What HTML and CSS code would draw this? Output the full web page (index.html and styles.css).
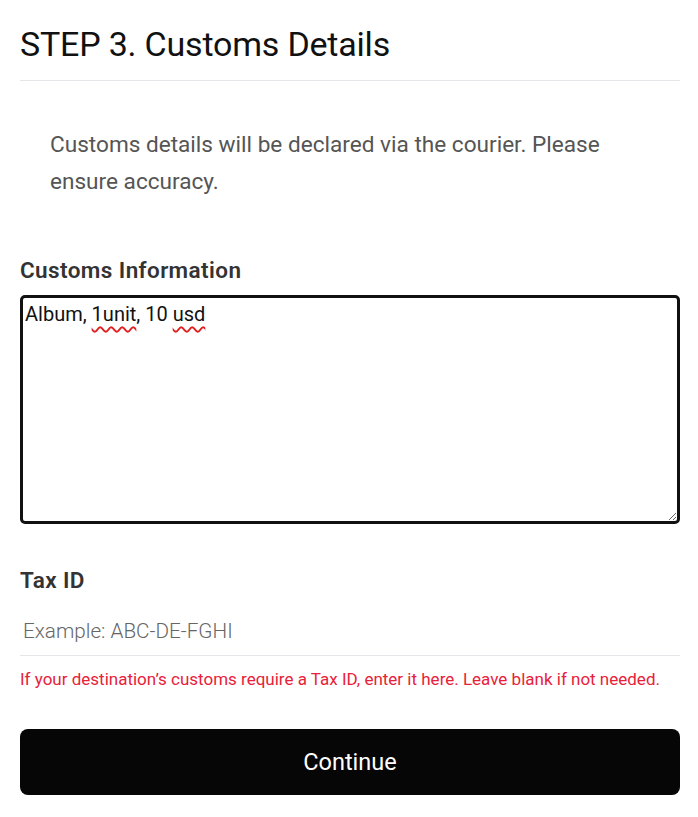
FILE: index.html
```html
<!DOCTYPE html>
<html lang="en">
<head>
    <meta charset="UTF-8">
    <meta name="viewport" content="width=device-width, initial-scale=1.0">
    <title>Customs Details</title>
    <link rel="stylesheet" href="styles.css">
</head>
<body>
    <div class="container">
        <header>
            <h1>STEP 3. Customs Details</h1>
        </header>

        <p class="notice">Customs details will be declared via the courier. Please ensure accuracy.</p>

        <form>
            <div class="form-group">
                <label for="customs_info">Customs Information</label>
                <div class="textarea" id="customs_info" contenteditable="true" spellcheck="false">Album, <span class="typo">1unit</span>, 10 <span class="typo">usd</span></div>
            </div>

            <div class="form-group">
                <label for="tax_id">Tax ID</label>
                <input type="text" id="tax_id" name="tax_id" placeholder="Example: ABC-DE-FGHI">
                <p class="hint">If your destination’s customs require a Tax ID, enter it here. Leave blank if not needed.</p>
            </div>

            <button type="submit" class="btn">Continue</button>
        </form>
    </div>
</body>
</html>
```

FILE: styles.css
```css
:root {
    --dark: #333;
    --line: #e6e6ea;
    --error: #e8213a;
}

* {
    margin: 0;
    padding: 0;
    box-sizing: border-box;
    font-family: Roboto, 'Noto Sans', sans-serif;
}

body {
    background: #fff;
    color: #111;
}

.container {
    padding: 0 18px 0 20px;
}

header {
    padding-top: 24px;
    padding-bottom: 16px;
    border-bottom: 1px solid var(--line);
}

header h1 {
    font-size: 34px;
    font-weight: 400;
    line-height: 40px;
    color: #111;
    letter-spacing: -0.2px;
}

.notice {
    padding: 45px 30px 0;
    font-size: 22.6px;
    line-height: 37px;
    color: #555;
}

form {
    padding-top: 56px;
}

.form-group {
    margin-bottom: 42px;
}

label {
    display: block;
    font-size: 22.5px;
    font-weight: 600;
    line-height: 28px;
    letter-spacing: 0.4px;
    color: var(--dark);
    margin-bottom: 11px;
}

.textarea {
    height: 229px;
    border: 3px solid #111;
    border-radius: 5px;
    padding: 3px 2px;
    font-size: 20px;
    line-height: 26px;
    color: #111;
    overflow: auto;
    resize: vertical;
    outline: none;
}

.typo {
    text-decoration: underline wavy #e02020;
    text-decoration-thickness: 1.5px;
    text-underline-offset: 5px;
}

input {
    display: block;
    width: 100%;
    border: none;
    border-bottom: 1px solid var(--line);
    padding: 14px 3px 12px;
    font-size: 20.7px;
    font-weight: 300;
    line-height: 24px;
    outline: none;
}

input::placeholder {
    color: #666;
}

.hint {
    margin-top: 12px;
    font-size: 17px;
    line-height: 22px;
    color: var(--error);
}

.form-group:last-of-type {
    margin-bottom: 39px;
}

.btn {
    display: block;
    width: 100%;
    height: 66px;
    background: #060606;
    color: #fff;
    border: none;
    border-radius: 8px;
    font-size: 23.5px;
    cursor: pointer;
}
```
